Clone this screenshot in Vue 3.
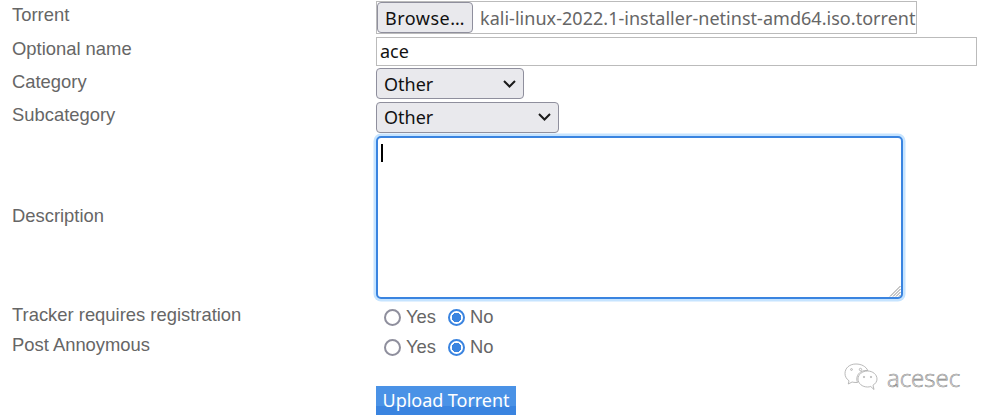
<script setup>
const radios = [
  { label: 'Tracker requires registration', name: 'tracker' },
  { label: 'Post Annoymous', name: 'anon' },
]
</script>

<template>
  <div class="form">
    <div class="row row-file">
      <div class="label">Torrent</div>
      <div class="file">
        <button class="browse" type="button">Browse…</button>
        <span class="filename">kali-linux-2022.1-installer-netinst-amd64.iso.torrent</span>
      </div>
    </div>
    <div class="row row-name">
      <div class="label">Optional name</div>
      <input class="text" type="text" value="ace" />
    </div>
    <div class="row row-cat">
      <div class="label">Category</div>
      <div class="select sel-a">
        <span>Other</span>
        <svg width="13" height="8" viewBox="0 0 13 8"><path d="M1 1l5.500 5.500L12 1" fill="none" stroke="#1a1a1a" stroke-width="2"/></svg>
      </div>
    </div>
    <div class="row row-sub">
      <div class="label">Subcategory</div>
      <div class="select sel-b">
        <span>Other</span>
        <svg width="13" height="8" viewBox="0 0 13 8"><path d="M1 1l5.500 5.500L12 1" fill="none" stroke="#1a1a1a" stroke-width="2"/></svg>
      </div>
    </div>
    <div class="row row-desc">
      <div class="label">Description</div>
      <div class="area">
        <textarea class="textarea"></textarea>
        <i class="caret"></i>
        <svg class="grip" width="12" height="12" viewBox="0 0 12 12">
          <path d="M11.500 1 1 11.500M11.500 4 4 11.500M11.500 7 7 11.500M11.500 10 10 11.500" stroke="#8f8f8f" stroke-width="1" fill="none"/>
        </svg>
      </div>
    </div>
    <div v-for="r in radios" :key="r.name" class="row row-radio">
      <div class="label">{{ r.label }}</div>
      <div class="radios">
        <label class="opt"><input type="radio" :name="r.name" />Yes</label>
        <label class="opt"><input type="radio" :name="r.name" checked />No</label>
      </div>
    </div>
    <div class="row row-submit">
      <div></div>
      <button class="submit" type="button">Upload Torrent</button>
    </div>

    <div class="mark">
      <svg width="34" height="30" viewBox="0 0 34 30" fill="none" stroke="#a0a0a0" stroke-width=".8">
        <path d="M12 1C5.500 1 1 5 1 10.500c0 3 1.500 5.500 4 7.300L4.300 21l3.800-2c1.200.3 2.300.5 3.900.5h1.500c-.5-1.200-.7-2.300-.7-3.500 0-5 4.200-8.500 9.200-8.500h1.800C22 3.500 17.500 1 12 1Z"/>
        <path d="M33 16c0-4.500-4.200-8-9.500-8-5.200 0-9.500 3.500-9.500 8s4.300 8 9.500 8c1.200 0 2.200-.2 3.200-.5l3.300 3-1-4.300c2.500-1.500 4-3.700 4-6.200Z"/>
        <circle cx="7.500" cy="6.500" r=".9" /><circle cx="16.500" cy="6.500" r="1.200" />
        <circle cx="20" cy="14" r=".7" /><circle cx="27" cy="14" r=".7" />
      </svg>
      <span>acesec</span>
    </div>
  </div>
</template>

<style>
html, body { margin: 0; background: #fff; }
</style>

<style scoped>
.form {
  position: relative;
  width: 992px;
  height: 420px;
  overflow: hidden;
  box-sizing: border-box;
  padding-top: 1px;
  font-family: "Liberation Sans", Arial, sans-serif;
  background: #fff;
}
.row {
  display: grid;
  grid-template-columns: 376px 1fr;
  align-items: start;
}
.label {
  padding-left: 12px;
  font-size: 18.4px;
  line-height: 28px;
  color: #666;
}
.row-file { height: 36px; }
.row-name { height: 31px; }
.row-name .label { line-height: 23px; }
.row-cat { height: 34px; }
.row-cat .label { line-height: 28px; }
.row-sub { height: 34px; }
.row-sub .label { line-height: 26px; }
.row-desc { height: 167px; }
.row-desc .label { padding-top: 66px; }
.row-radio { height: 30px; }
.row-radio .label { line-height: 24px; }
.row-submit { height: 40px; margin-top: 23px; }
.row-submit button { justify-self: start; }

.file {
  box-sizing: border-box;
  width: 541px;
  height: 33px;
  border: 1px solid #bbb;
  display: flex;
  align-items: center;
  font: 18px/24px "Noto Sans", sans-serif;
  background: #fff;
  overflow: hidden;
  white-space: nowrap;
}
.browse {
  box-sizing: border-box;
  flex: none;
  width: 96px;
  height: 31px;
  padding: 0;
  margin-right: 7px;
  font: inherit;
  letter-spacing: .5px;
  color: #111;
  background: #e9e9ed;
  border: 1px solid #8f8f9d;
  border-radius: 4px;
}
.filename { color: #666; letter-spacing: .03px; }

.text {
  display: block;
  box-sizing: border-box;
  width: 601px;
  height: 29px;
  margin: 0;
  padding: 0 3px 2px;
  border: 1px solid #bbb;
  border-radius: 0;
  outline: none;
  font: 18px "Noto Sans", sans-serif;
  color: #111;
  background: #fff;
}
.select {
  box-sizing: border-box;
  height: 31px;
  padding: 0 7px;
  display: flex;
  align-items: center;
  justify-content: space-between;
  font: 18px "Noto Sans", sans-serif;
  color: #111;
  background: #e9e9ed;
  border: 1px solid #8f8f9d;
  border-radius: 4px;
}
.sel-a { width: 148px; }
.sel-b { width: 183px; padding-bottom: 2px; }

.area {
  position: relative;
  width: 527px;
  height: 163px;
}
.textarea {
  display: block;
  box-sizing: border-box;
  width: 100%;
  height: 100%;
  margin: 0;
  padding: 0;
  resize: none;
  outline: none;
  background: #fff;
  border: 2px solid #3a84e0;
  border-radius: 5px;
  box-shadow: 0 0 0 2.500px #c6e4ff;
}
.caret {
  position: absolute;
  left: 5px;
  top: 8px;
  width: 2px;
  height: 18px;
  background: #000;
}
.grip {
  position: absolute;
  right: 2px;
  bottom: 2px;
}
.radios {
  display: flex;
  align-items: center;
  height: 28px;
  padding-left: 8px;
  gap: 12px;
  color: #666;
  font: 18.4px/28px "Liberation Sans", Arial, sans-serif;
}
.opt {
  display: flex;
  align-items: center;
  gap: 5px;
}
.opt input {
  appearance: none;
  box-sizing: border-box;
  width: 17px;
  height: 17px;
  margin: 0;
  border: 2px solid #8f8f9d;
  border-radius: 50%;
  background: #fff;
}
.opt input:checked {
  border-color: #3a84e0;
  background: radial-gradient(circle, #3a84e0 0, #3a84e0 4.500px, #fff 5px);
}
.submit {
  box-sizing: border-box;
  width: 140px;
  height: 29px;
  padding: 0 0 1px;
  border: 0;
  border-radius: 0;
  color: #fff;
  font: 18px "Noto Sans", sans-serif;
  letter-spacing: -.05px;
  background: linear-gradient(#4a92e6 0, #4a92e6 68%, #3a84e0 68%);
}
.mark {
  position: absolute;
  left: 844px;
  top: 363px;
  display: flex;
  align-items: center;
  gap: 9px;
  opacity: .9;
}
.mark span {
  font: 200 24px/30px "Open Sans", sans-serif;
  color: transparent;
  -webkit-text-stroke: .6px #777;
}
</style>
